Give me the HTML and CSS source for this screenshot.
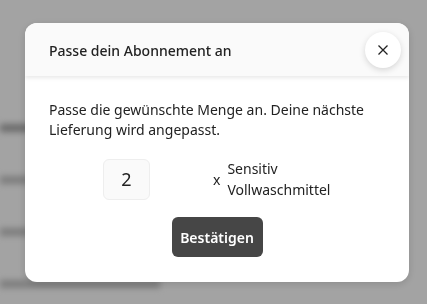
FILE: index.html
```html
<!DOCTYPE html>
<html>
<head>
    <title>Abonnement anpassen</title>
    <link rel="stylesheet" href="styles.css">
</head>
<body>
    <div class="page">
        <div class="bg-bar bg-wide"></div>
        <div class="bg-bar"></div>
        <div class="bg-bar bg-short"></div>
        <div class="bg-bar"></div>
    </div>
    <div class="overlay">
        <div class="modal">
            <div class="modal-header">
                <h2 class="modal-title">Passe dein Abonnement an</h2>
                <button class="close-btn" aria-label="Schließen">
                    <svg width="10" height="10" viewBox="0 0 10 10">
                        <path d="M0.5 0.5 L9.5 9.5 M9.5 0.5 L0.5 9.5" stroke="#222" stroke-width="1.3" fill="none"/>
                    </svg>
                </button>
            </div>
            <div class="modal-body">
                <p class="intro">Passe die gewünschte Menge an. Deine nächste Lieferung wird angepasst.</p>
                <div class="qty-row">
                    <input class="qty" type="text" value="2">
                    <span class="times">x</span>
                    <span class="product">Sensitiv<br>Vollwaschmittel</span>
                </div>
                <div class="actions">
                    <button class="btn">Bestätigen</button>
                </div>
            </div>
        </div>
    </div>
</body>
</html>
```

FILE: styles.css
```css
html, body {
    height: 100%;
    overflow: hidden;
}
body {
    margin: 0;
    font-family: "Noto Sans", sans-serif;
    color: #222;
    background: #fff;
}
.page {
    height: 100%;
    box-sizing: border-box;
    padding: 124px 0 0 0;
    overflow: hidden;
    filter: blur(3px);
}
.bg-bar {
    height: 8px;
    width: 160px;
    margin: 0 0 44px 0;
    background: #c4c4c4;
}
.bg-wide { width: 200px; background: #a8a8a8; }
.bg-short { width: 90px; }
.overlay {
    position: fixed;
    inset: 0;
    background: rgba(0, 0, 0, 0.36);
    display: flex;
    align-items: flex-start;
    padding: 23px 0 0 25px;
}
.modal {
    width: 384px;
    background: #fff;
    border-radius: 12px;
    overflow: hidden;
    box-shadow: 0 2px 8px rgba(0, 0, 0, 0.15);
}
.modal-header {
    background: #fafafa;
    height: 53px;
    display: flex;
    align-items: center;
    justify-content: space-between;
    padding: 0 8px 0 24px;
    box-shadow: 0 2px 4px rgba(0, 0, 0, 0.09);
    position: relative;
}
.modal-title {
    margin: 0;
    font-size: 14px;
    font-weight: 500;
    margin-top: 1px;
}
.close-btn {
    width: 36px;
    height: 36px;
    border-radius: 50%;
    border: 0;
    background: #fff;
    box-shadow: 0 2px 6px rgba(0, 0, 0, 0.15);
    display: flex;
    align-items: center;
    justify-content: center;
    padding: 0;
    cursor: pointer;
}
.modal-body {
    padding: 24px 24px 25px 24px;
}
.intro {
    margin: 0;
    font-size: 14px;
    line-height: 20px;
}
.qty-row {
    display: flex;
    align-items: center;
    margin-top: 18px;
    padding-left: 54px;
}
.qty {
    width: 47px;
    height: 41px;
    box-sizing: border-box;
    border: 1px solid #eee;
    border-radius: 6px;
    background: #fafafa;
    text-align: center;
    font-family: "Noto Sans", sans-serif;
    font-size: 18px;
    color: #222;
}
.times {
    margin-left: 63px;
    font-size: 14px;
}
.product {
    margin-left: 7px;
    font-size: 14px;
    line-height: 21px;
}
.actions {
    text-align: center;
    margin-top: 17px;
}
.btn {
    background: #464646;
    color: #fff;
    border: 0;
    border-radius: 6px;
    height: 40px;
    width: 91px;
    font-family: "Noto Sans", sans-serif;
    font-size: 14px;
    font-weight: 600;
    cursor: pointer;
}
```
